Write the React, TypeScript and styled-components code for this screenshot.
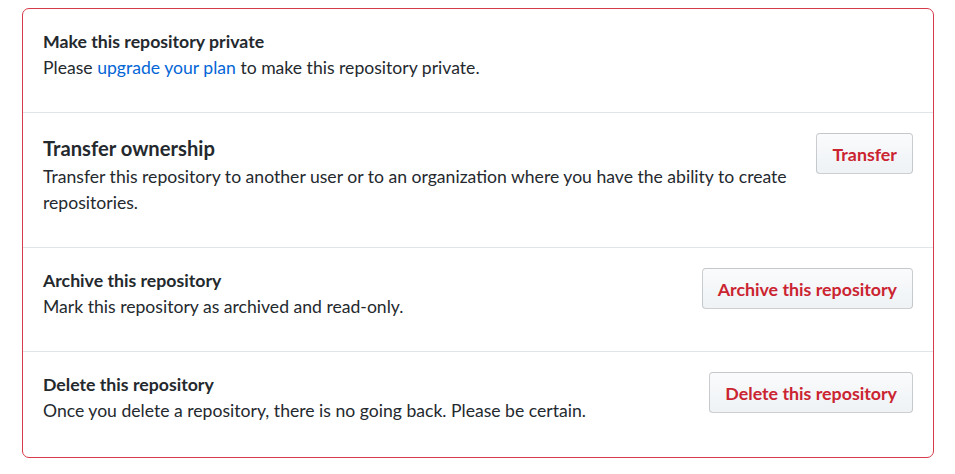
import React from "react";
import styled, { createGlobalStyle } from "styled-components";

const Global = createGlobalStyle`
  html, body { margin: 0; padding: 0; background: #ffffff; }
  body {
    font-family: Lato, "Noto Sans", "Liberation Sans", sans-serif;
    color: #24292e;
    -webkit-font-smoothing: antialiased;
  }
`;

const Page = styled.div`
  padding: 8px 21px 16px 22px;
`;

const Box = styled.div`
  border: 1px solid #d73a49;
  border-radius: 7px;
  background: #fff;
`;

const Row = styled.div`
  display: flex;
  align-items: flex-start;
  justify-content: space-between;
  gap: 16px;
  padding: 20px 20px 31px 20px;
  & + & {
    border-top: 1px solid #e1e4e8;
  }
  &:last-child {
    padding-bottom: 33px;
  }
`;

const Text = styled.div`
  flex: 1;
  min-width: 0;
`;

const Title = styled.div<{ $large?: boolean }>`
  font-weight: 700;
  font-size: ${(p) => (p.$large ? "20.2px" : "17.7px")};
  line-height: ${(p) => (p.$large ? "31px" : "26px")};
  color: #24292e;
`;

const Desc = styled.p`
  margin: 0;
  font-size: 17.6px;
  line-height: 26px;
  color: #24292e;
`;

const Link = styled.a`
  color: #0366d6;
  text-decoration: none;
`;

const Button = styled.button`
  flex: none;
  height: 41px;
  padding: 0 15px;
  border: 1px solid rgba(27, 31, 35, 0.2);
  border-radius: 4px;
  background: linear-gradient(#fafbfc, #eff3f6 90%);
  color: #cb2431;
  font-family: inherit;
  font-weight: 700;
  font-size: 17.8px;
  line-height: 26px;
  cursor: pointer;
`;

export default function App() {
  return (
    <>
      <Global />
      <Page>
        <Box>
          <Row>
            <Text>
              <Title>Make this repository private</Title>
              <Desc>
                Please <Link href="#">upgrade your plan</Link> to make this repository private.
              </Desc>
            </Text>
          </Row>
          <Row>
            <Text>
              <Title $large>Transfer ownership</Title>
              <Desc>
                Transfer this repository to another user or to an organization where you have the ability to create
                repositories.
              </Desc>
            </Text>
            <Button>Transfer</Button>
          </Row>
          <Row>
            <Text>
              <Title>Archive this repository</Title>
              <Desc>Mark this repository as archived and read-only.</Desc>
            </Text>
            <Button>Archive this repository</Button>
          </Row>
          <Row>
            <Text>
              <Title>Delete this repository</Title>
              <Desc>Once you delete a repository, there is no going back. Please be certain.</Desc>
            </Text>
            <Button>Delete this repository</Button>
          </Row>
        </Box>
      </Page>
    </>
  );
}
